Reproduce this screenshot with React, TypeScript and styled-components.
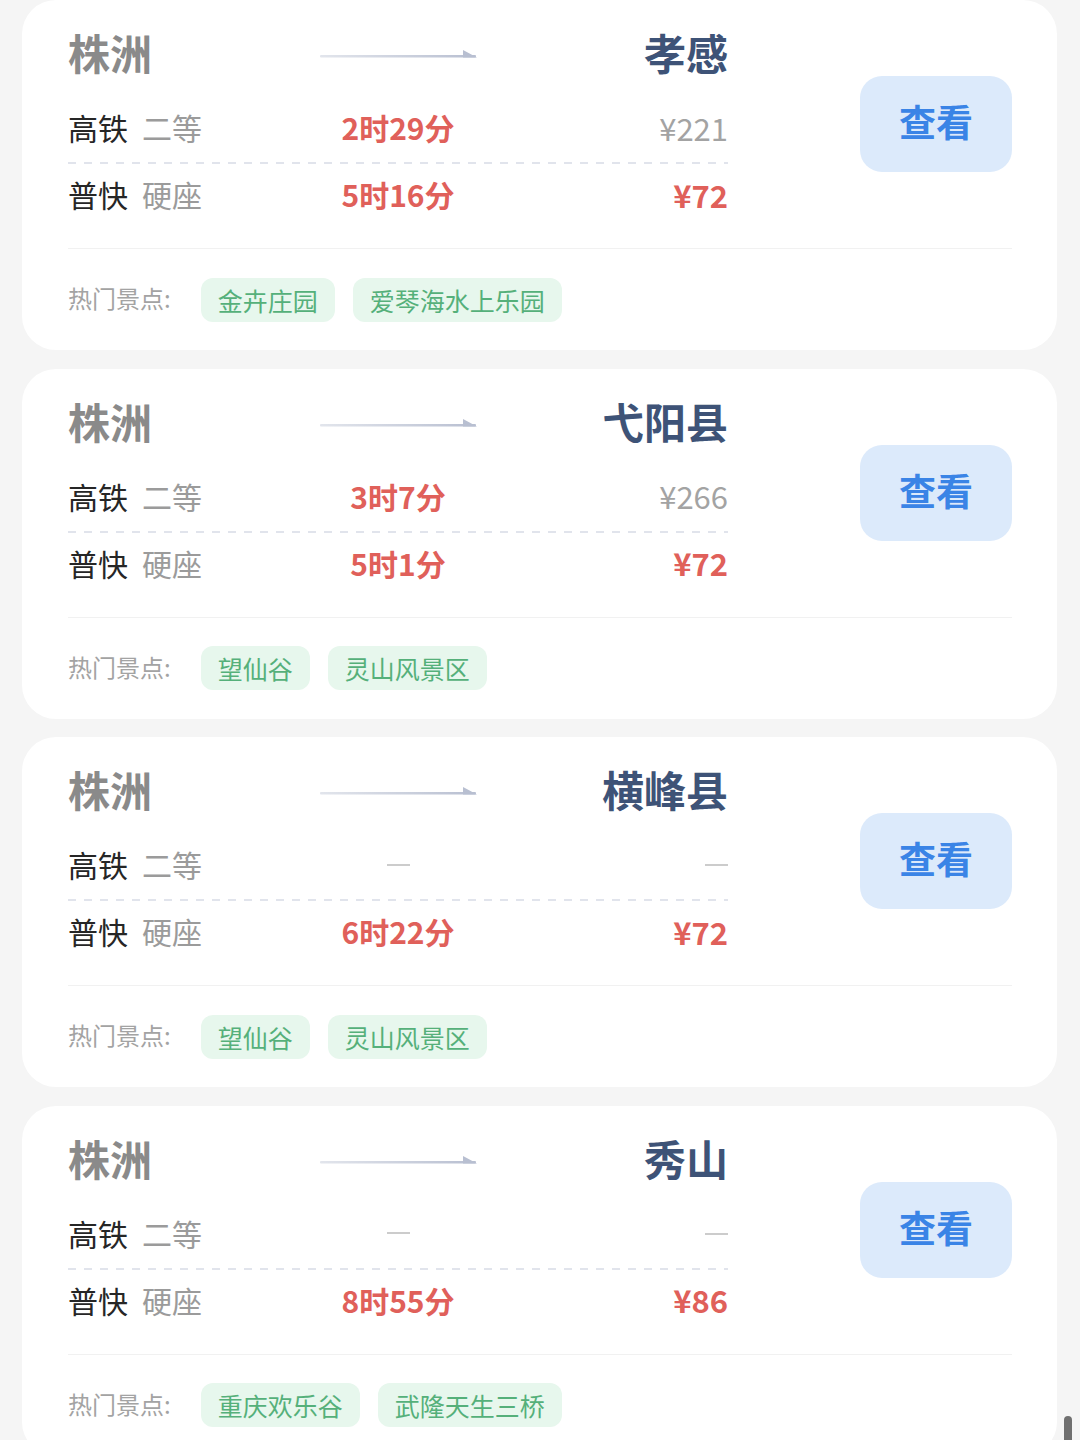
import styled, { createGlobalStyle } from 'styled-components';

const GlobalStyle = createGlobalStyle`
  *, *::before, *::after {
    box-sizing: border-box;
  }
  body {
    margin: 0;
    background: #f5f5f5;
    font-family: "Noto Sans CJK SC", "Noto Sans", sans-serif;
  }
`;

const Page = styled.div`
  display: flex;
  flex-direction: column;
  gap: 18.5px;
  padding: 0 23px 0 22px;
`;

const Card = styled.section`
  height: 350px;
  flex-shrink: 0;
  background: #fff;
  border-radius: 34px;
  padding: 0 45px 0 46px;
  display: flex;
  flex-direction: column;
`;

const TopSection = styled.div`
  display: flex;
  justify-content: space-between;
  padding-top: 21px;
  margin-bottom: 20px;
`;

const Routes = styled.div`
  width: 660px;
  display: flex;
  flex-direction: column;
`;

const Header = styled.div`
  display: grid;
  grid-template-columns: 1fr 1fr 1fr;
  align-items: center;
  height: 62px;
  margin-bottom: 7px;
`;

const City = styled.div<{ $dest?: boolean }>`
  font-size: 42px;
  font-weight: 700;
  line-height: 1;
  color: ${(p) => (p.$dest ? '#3e5377' : '#8a8a8a')};
  text-align: ${(p) => (p.$dest ? 'right' : 'left')};
`;

const ArrowWrap = styled.div`
  display: flex;
  justify-content: center;
  padding-top: 4px;
`;

const Row = styled.div<{ $first?: boolean }>`
  display: grid;
  grid-template-columns: 1fr 1fr 1fr;
  align-items: center;
  height: ${(p) => (p.$first ? '74px' : '64px')};
  padding-bottom: ${(p) => (p.$first ? '0' : '4px')};
  font-size: 30px;
  line-height: 1;
  background-image: ${(p) =>
    p.$first ? 'linear-gradient(to right, #e1e4ec 50%, transparent 0)' : 'none'};
  background-size: 16px 2px;
  background-repeat: repeat-x;
  background-position: left bottom;
`;

const TrainType = styled.div`
  color: #262626;
  display: flex;
  gap: 14px;
`;

const Seat = styled.span`
  color: #9b9b9b;
`;

const Duration = styled.div`
  text-align: center;
  color: #e0605a;
  font-weight: 700;
`;

const Price = styled.div<{ $best?: boolean }>`
  text-align: right;
  font-size: 31px;
  color: ${(p) => (p.$best ? '#e0605a' : '#a3a3a3')};
  font-weight: ${(p) => (p.$best ? 700 : 400)};
`;

const Empty = styled.span`
  display: inline-block;
  width: 23px;
  height: 2px;
  background: #cccccc;
  vertical-align: middle;
  transform: translateY(-4px);
`;

const ViewButton = styled.button`
  width: 152px;
  height: 96px;
  margin-top: 55px;
  padding: 0 0 6px;
  border: none;
  border-radius: 22px;
  background: #dceafb;
  color: #3a84e6;
  font-family: inherit;
  font-size: 37px;
  font-weight: 700;
  cursor: pointer;
`;

const Divider = styled.div`
  height: 1px;
  background: #f1f1f1;
`;

const Spots = styled.div`
  display: flex;
  align-items: center;
  height: 101px;
`;

const SpotsLabel = styled.span`
  font-size: 24px;
  color: #a3a3a3;
  margin-right: 30px;
  margin-top: -4px;
`;

const Tag = styled.span`
  height: 44px;
  display: inline-flex;
  align-items: center;
  padding: 0 17px;
  margin-right: 18px;
  border-radius: 12px;
  background: #e7f7ed;
  color: #55b07a;
  font-size: 25px;
`;

const ScrollThumb = styled.div`
  position: fixed;
  right: 8px;
  bottom: -6px;
  width: 8px;
  height: 30px;
  border-radius: 4px;
  background: #707070;
`;

const Arrow = () => (
  <svg width="157" height="10" viewBox="0 0 157 10">
    <defs>
      <linearGradient id="arrowFade" x1="0" x2="1" y1="0" y2="0">
        <stop offset="0" stopColor="#e2e5ec" />
        <stop offset="1" stopColor="#b8bfd1" />
      </linearGradient>
    </defs>
    <rect x="0" y="6" width="156" height="2.5" rx="1" fill="url(#arrowFade)" />
    <polygon points="143,1 157,8.5 143,8.5" fill="#b8bfd1" />
  </svg>
);

interface Leg {
  train: string;
  seat: string;
  time?: string;
  price?: string;
}

interface Trip {
  to: string;
  fast: Leg;
  slow: Leg;
  best: 'fast' | 'slow';
  spots: string[];
}

const trips: Trip[] = [
  {
    to: '孝感',
    fast: { train: '高铁', seat: '二等', time: '2时29分', price: '¥221' },
    slow: { train: '普快', seat: '硬座', time: '5时16分', price: '¥72' },
    best: 'slow',
    spots: ['金卉庄园', '爱琴海水上乐园'],
  },
  {
    to: '弋阳县',
    fast: { train: '高铁', seat: '二等', time: '3时7分', price: '¥266' },
    slow: { train: '普快', seat: '硬座', time: '5时1分', price: '¥72' },
    best: 'slow',
    spots: ['望仙谷', '灵山风景区'],
  },
  {
    to: '横峰县',
    fast: { train: '高铁', seat: '二等' },
    slow: { train: '普快', seat: '硬座', time: '6时22分', price: '¥72' },
    best: 'slow',
    spots: ['望仙谷', '灵山风景区'],
  },
  {
    to: '秀山',
    fast: { train: '高铁', seat: '二等' },
    slow: { train: '普快', seat: '硬座', time: '8时55分', price: '¥86' },
    best: 'slow',
    spots: ['重庆欢乐谷', '武隆天生三桥'],
  },
];

const LegRow = ({ leg, first, best }: { leg: Leg; first?: boolean; best: boolean }) => (
  <Row $first={first}>
    <TrainType>
      {leg.train}
      <Seat>{leg.seat}</Seat>
    </TrainType>
    <Duration>{leg.time ?? <Empty />}</Duration>
    <Price $best={best && !!leg.price}>{leg.price ?? <Empty />}</Price>
  </Row>
);

export default function App() {
  return (
    <>
      <GlobalStyle />
      <Page>
        {trips.map((trip, i) => (
          <Card key={i}>
            <TopSection>
              <Routes>
                <Header>
                  <City>株洲</City>
                  <ArrowWrap>
                    <Arrow />
                  </ArrowWrap>
                  <City $dest>{trip.to}</City>
                </Header>
                <LegRow leg={trip.fast} first best={trip.best === 'fast'} />
                <LegRow leg={trip.slow} best={trip.best === 'slow'} />
              </Routes>
              <ViewButton>查看</ViewButton>
            </TopSection>
            <Divider />
            <Spots>
              <SpotsLabel>热门景点:</SpotsLabel>
              {trip.spots.map((s) => (
                <Tag key={s}>{s}</Tag>
              ))}
            </Spots>
          </Card>
        ))}
      </Page>
      <ScrollThumb />
    </>
  );
}
